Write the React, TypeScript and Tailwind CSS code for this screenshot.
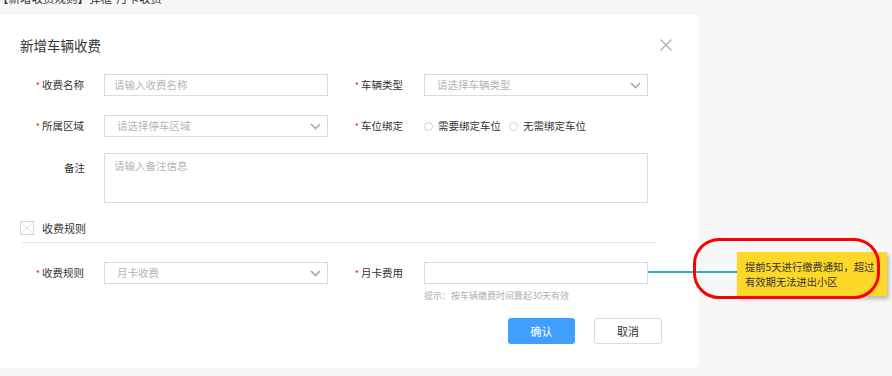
import React from "react"

const font = { fontFamily: '"Noto Sans CJK SC", "Noto Sans", sans-serif' }

function Chevron() {
  return (
    <svg width="11" height="7" viewBox="0 0 11 7" className="shrink-0">
      <path d="M1 1l4.5 4.5L10 1" fill="none" stroke="#a8a8a8" strokeWidth="1.6" />
    </svg>
  )
}

function Label({ text, required = true, pr = "pr-[20px]" }: { text: string; required?: boolean; pr?: string }) {
  return (
    <div className={`flex w-[84px] shrink-0 items-center justify-end text-[10.5px] text-[#333] ${pr}`}>
      {required && <span className="mr-[2px] text-[9px] leading-none text-[#f5222d]">*</span>}
      {text}
    </div>
  )
}

function Input({ placeholder = "" }: { placeholder?: string }) {
  return (
    <div className="flex h-[22px] w-[224px] items-center border border-[#dcdcdc] bg-white px-[9px] text-[10.5px] text-[#b4b4b4]">
      {placeholder}
    </div>
  )
}

function Select({ placeholder }: { placeholder: string }) {
  return (
    <div className="flex h-[22px] w-[224px] items-center justify-between border border-[#dcdcdc] bg-white pl-[12px] pr-[6px] text-[10.5px] text-[#b4b4b4]">
      <span>{placeholder}</span>
      <Chevron />
    </div>
  )
}

function Radio({ text }: { text: string }) {
  return (
    <div className="flex items-center gap-[5px] text-[10.5px] text-[#333]">
      <span className="h-[9px] w-[9px] rounded-full border border-[#d0d0d0] bg-white" />
      {text}
    </div>
  )
}

export default function App() {
  return (
    <div style={font} className="relative h-[376px] w-[892px] overflow-hidden bg-[#f7f7f7]">
      <div className="h-[15px] overflow-hidden">
        <div className="-ml-[3px] -mt-[9px] whitespace-nowrap text-[11.5px] leading-[14px] text-[#333]">【新增收费规则】弹框-月卡收费</div>
      </div>

      <div className="w-[699px] rounded-r-[6px] bg-white pb-[24px] pl-[20px] pr-[37px]">
        <div className="flex items-center justify-between pt-[20px]">
          <h1 className="text-[13.5px] leading-[20px] text-[#333]">新增车辆收费</h1>
          <svg width="12" height="12" viewBox="0 0 12 12" className="-mr-[10px]">
            <path d="M0.5 0.5l11 11M11.5 0.5l-11 11" stroke="#aaa" strokeWidth="1.1" />
          </svg>
        </div>

        <div className="mt-[19px] flex h-[22px] items-center">
          <div className="flex w-[320px] items-center">
            <Label text="收费名称" />
            <Input placeholder="请输入收费名称" />
          </div>
          <div className="flex items-center">
            <Label text="车辆类型" pr="pr-[21px]" />
            <Select placeholder="请选择车辆类型" />
          </div>
        </div>

        <div className="mt-[19px] flex h-[22px] items-center">
          <div className="flex w-[320px] items-center">
            <Label text="所属区域" />
            <Select placeholder="请选择停车区域" />
          </div>
          <div className="flex items-center">
            <Label text="车位绑定" pr="pr-[21px]" />
            <div className="flex items-center gap-[8px]">
              <Radio text="需要绑定车位" />
              <Radio text="无需绑定车位" />
            </div>
          </div>
        </div>

        <div className="mt-[16px] flex">
          <Label text="备注" required={false} pr="pr-[19px] pt-[7px] items-start" />
          <div className="h-[50px] w-[544px] border border-[#dcdcdc] px-[9px] pt-[4px] text-[10.5px] text-[#b4b4b4]">请输入备注信息</div>
        </div>

        <div className="mt-[17px] flex items-center gap-[8px]">
          <svg width="14" height="14" viewBox="0 0 14 14">
            <rect x="0.5" y="0.5" width="13" height="13" fill="#fff" stroke="#d9d9d9" />
            <path d="M1 1l12 12M13 1L1 13" stroke="#dedede" strokeWidth="0.9" />
          </svg>
          <span className="text-[11px] leading-[16px] text-[#333]">收费规则</span>
        </div>
        <div className="ml-[2px] mt-[6px] h-px w-[635px] bg-[#e4e4e4]" />

        <div className="mt-[19px] flex">
          <div className="flex h-[22px] w-[320px] items-center">
            <Label text="收费规则" />
            <Select placeholder="月卡收费" />
          </div>
          <div className="flex flex-col">
            <div className="flex h-[22px] items-center">
              <Label text="月卡费用" pr="pr-[21px]" />
              <Input />
            </div>
            <div className="ml-[84px] mt-[5px] whitespace-nowrap text-[9px] leading-[13px] text-[#b0b0b0]">提示：按车辆缴费时间算起30天有效</div>
          </div>
        </div>

        <div className="mt-[16px] flex justify-end gap-[19px]">
          <button className="h-[26px] w-[67px] rounded-[3px] bg-[#409eff] text-[11px] text-white">确认</button>
          <button className="h-[26px] w-[68px] rounded-[3px] border border-[#dcdcdc] bg-white text-[11px] text-[#333]">取消</button>
        </div>
      </div>

      {/* annotation overlay */}
      <div className="absolute left-[648px] top-[271px] h-[2px] w-[90px] bg-[#35a9d4]" />
      <div className="absolute left-[737px] top-[252px] w-[150px] whitespace-nowrap bg-[#fdd829] py-[7px] pl-[8px] text-[10.3px] leading-[15px] text-[#333] shadow-[2px_3px_4px_rgba(0,0,0,0.25)]">
        提前5天进行缴费通知，超过
        <br />
        有效期无法进出小区
      </div>
      <div className="absolute left-[693px] top-[238px] h-[61px] w-[187px] rounded-[26px] border-[3px] border-[#ff0000]" />
    </div>
  )
}
